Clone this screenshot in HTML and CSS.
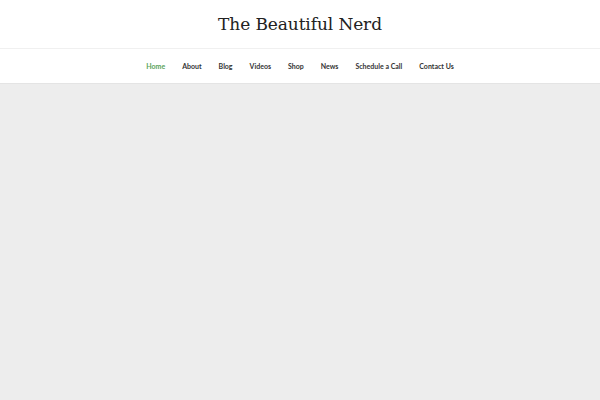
FILE: index.html
```html
<!DOCTYPE html>
<html>
<head>
<meta charset="utf-8">
<link rel="stylesheet" href="styles.css">
</head>
<body>
<header class="site-header">
  <div class="brand">The Beautiful Nerd</div>
</header>
<nav class="main-nav">
  <a class="nav-item active" href="#">Home</a>
  <a class="nav-item" href="#">About</a>
  <a class="nav-item" href="#">Blog</a>
  <a class="nav-item" href="#">Videos</a>
  <a class="nav-item" href="#">Shop</a>
  <a class="nav-item" href="#">News</a>
  <a class="nav-item" href="#">Schedule a Call</a>
  <a class="nav-item" href="#">Contact Us</a>
</nav>
<main class="content"></main>
</body>
</html>
```
FILE: styles.css
```css
html, body {
  margin: 0;
  padding: 0;
  height: 100%;
}
body {
  background: #ededed;
  display: flex;
  flex-direction: column;
}
.site-header {
  background: #fff;
  height: 48px;
  display: flex;
  align-items: center;
  justify-content: center;
  border-bottom: 1px solid #f0f0f0;
}
.brand {
  font-family: "DejaVu Serif", serif;
  font-size: 17px;
  color: #222;
  letter-spacing: -0.1px;
}
.main-nav {
  background: #fff;
  height: 34px;
  display: flex;
  align-items: center;
  justify-content: center;
  gap: 17px;
  border-bottom: 1px solid #e4e4e4;
}
.nav-item {
  font-family: Lato, sans-serif;
  font-weight: 700;
  font-size: 7px;
  color: #333;
  text-decoration: none;
}
.nav-item.active {
  color: #5aa35a;
}
.content {
  flex: 1;
}
```
